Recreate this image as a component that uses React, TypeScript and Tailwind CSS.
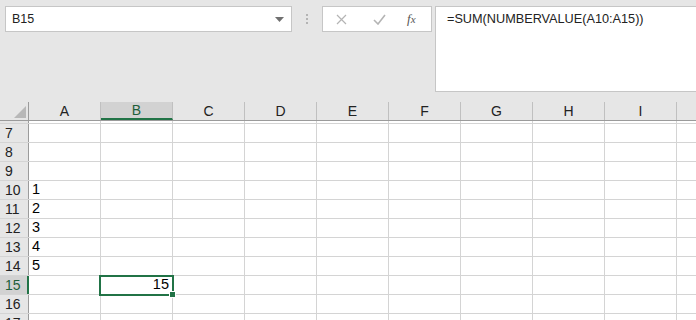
import React from "react";

const cols = ["A", "B", "C", "D", "E", "F", "G", "H", "I", "J"];
const rows = [7, 8, 9, 10, 11, 12, 13, 14, 15, 16, 17];
const values: Record<number, string> = { 10: "1", 11: "2", 12: "3", 13: "4", 14: "5" };

const Cell = (props: { row: number; col: string }) => {
  const { row, col } = props;
  const selected = row === 15 && col === "B";
  return (
    <div
      className={`relative flex h-full w-[72px] shrink-0 items-center border-r border-[#d4d4d4] px-[3px] ${
        selected ? "z-10" : ""
      }`}
    >
      {col === "A" && values[row] && <span className="text-[14.5px] text-black">{values[row]}</span>}
      {selected && (
        <>
          <span className="ml-auto text-[14.5px] text-black">15</span>
          <div className="absolute -top-px -left-[2px] h-[21px] w-[75px] border-2 border-[#217346]" />
          <div className="absolute -bottom-[4px] -right-[4px] h-[7px] w-[7px] border border-white bg-[#217346]" />
        </>
      )}
    </div>
  );
};

const App = () => {
  return (
    <div className="h-[320px] w-[696px] overflow-hidden bg-[#e6e6e6] font-['Liberation_Sans',Arial,sans-serif]">
      {/* formula bar area */}
      <div className="flex h-[102px] items-start pt-[6px] pl-[5px]">
        <div className="flex h-[26px] w-[287px] items-center border border-[#c6c6c6] bg-white pl-[6px] pr-[7px] text-[12.5px] text-[#222]">
          <span>B15</span>
          <svg className="ml-auto" width="9" height="5" viewBox="0 0 9 5">
            <path d="M0 0h9L4.5 5z" fill="#707070" />
          </svg>
        </div>
        <div className="flex h-[26px] w-[30px] flex-col items-center justify-center gap-[2px]">
          <span className="h-[2px] w-[2px] bg-[#b4b4b4]" />
          <span className="h-[2px] w-[2px] bg-[#b4b4b4]" />
          <span className="h-[2px] w-[2px] bg-[#b4b4b4]" />
        </div>
        <div className="flex h-[26px] w-[110px] items-center border border-[#c6c6c6] bg-white">
          <svg className="ml-[13px]" width="11" height="11" viewBox="0 0 11 11">
            <path d="M1 1l9 9M10 1l-9 9" stroke="#b4b4b4" strokeWidth="1.2" />
          </svg>
          <svg className="ml-[26px]" width="13" height="11" viewBox="0 0 13 11">
            <path d="M1 6l4 4 7-9" stroke="#b4b4b4" strokeWidth="1.6" fill="none" />
          </svg>
          <span className="ml-[21px] font-['Liberation_Serif',serif] text-[13px] italic text-[#555]">
            f<span className="text-[11px]">x</span>
          </span>
        </div>
        <div className="ml-[3px] h-[86px] flex-1 border border-r-0 border-[#c6c6c6] bg-white pt-[3px] pl-[11px] text-[12.7px] text-[#222]">
          =SUM(NUMBERVALUE(A10:A15))
        </div>
      </div>

      {/* column header */}
      <div className="flex h-[19px] border-b border-[#9b9b9b]">
        <div className="flex w-[29px] shrink-0 items-end justify-end border-r border-[#9b9b9b] pr-[2px] pb-[2px]">
          <svg width="12" height="12" viewBox="0 0 12 12">
            <path d="M12 0v12H0z" fill="#b8b8b8" />
          </svg>
        </div>
        {cols.map((c) => (
          <div
            key={c}
            className={`flex w-[72px] shrink-0 items-center justify-center border-r border-[#c0c0c0] text-[14px] ${
              c === "B" ? "border-b-2 border-b-[#217346] bg-[#d2d2d2] text-[#1e5f3a]" : "text-[#222]"
            }`}
          >
            {c === "J" ? "" : c}
          </div>
        ))}
      </div>

      {/* grid */}
      <div className="bg-white">
        <div className="flex h-[3px] border-b border-[#d4d4d4]">
          <div className="w-[29px] shrink-0 border-r border-[#9b9b9b] bg-[#e6e6e6]" />
          {cols.map((c) => (
            <div key={c} className="w-[72px] shrink-0 border-r border-[#d4d4d4]" />
          ))}
        </div>
        {rows.map((r) => (
          <div key={r} className="flex h-[19px] border-b border-[#d4d4d4]">
            <div
              className={`flex w-[29px] shrink-0 items-center pl-[5px] text-[14px] ${
                r === 15
                  ? "border-r-2 border-[#217346] bg-[#d2d2d2] text-[#1e5f3a]"
                  : "border-r border-[#9b9b9b] bg-[#e6e6e6] text-[#222]"
              }`}
            >
              {r}
            </div>
            {cols.map((c) => (
              <Cell key={c} row={r} col={c} />
            ))}
          </div>
        ))}
      </div>
    </div>
  );
};

export default App;
